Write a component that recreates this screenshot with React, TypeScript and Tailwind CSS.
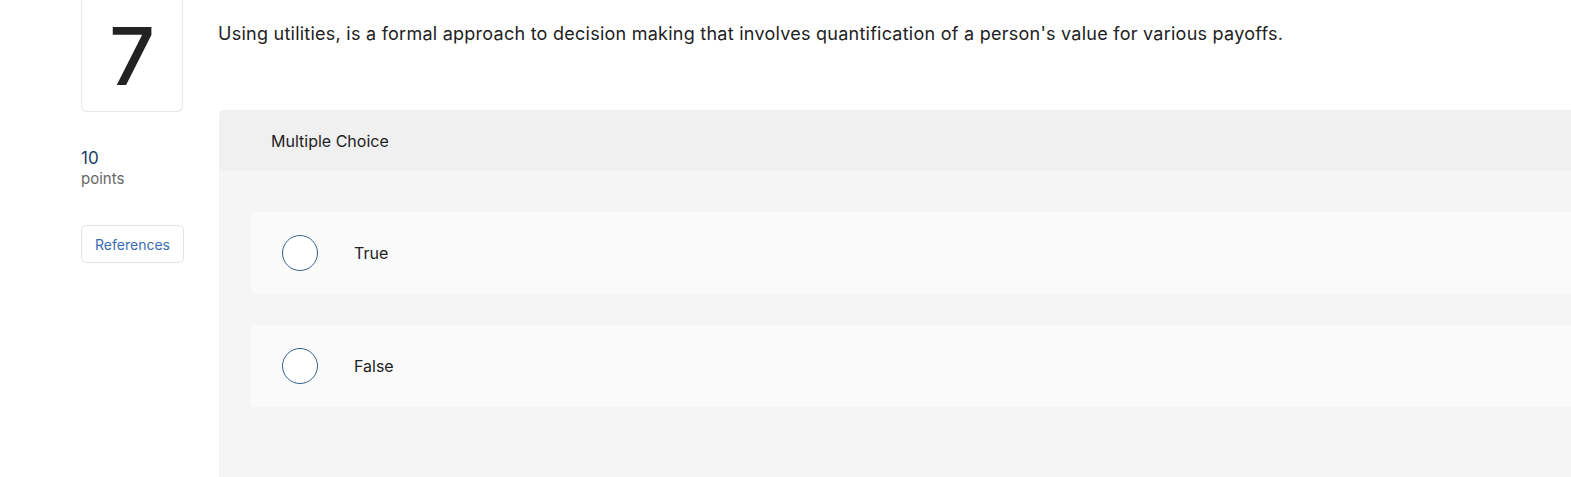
import React from 'react'

const font = { fontFamily: 'Inter, "Open Sans", sans-serif' }

function Option({ label }: { label: string }) {
  return (
    <div className="flex h-[82px] items-center rounded-[4px] bg-[#fafafa] pl-[31px]">
      <span className="h-[36px] w-[36px] shrink-0 rounded-full border-[1.5px] border-[#36618c] bg-white" />
      <span className="ml-[36px] text-[16px] text-[#222]">{label}</span>
    </div>
  )
}

export default function App() {
  return (
    <div className="h-[477px] w-[1571px] overflow-hidden bg-white" style={font}>
      <div className="flex">
        <div className="ml-[81px] flex w-[102px] shrink-0 flex-col">
          <div className="flex h-[112px] items-center justify-center rounded-b-[6px] border border-t-0 border-[#e6e6e6] text-[80px] font-medium leading-none text-[#222]">
            7
          </div>
          <div className="mt-[36px] text-[17px] leading-[20px] text-[#1c3f63]">10</div>
          <div className="mt-[2px] text-[15px] leading-[18px] text-[#666]">points</div>
          <button className="mt-[37px] h-[38px] w-[103px] rounded-[5px] border border-[#e3e3e3] bg-white text-[14px] text-[#3a6cb4]">
            References
          </button>
        </div>

        <div className="ml-[36px] flex min-w-[1400px] flex-col">
          <p className="-ml-px mt-[22px] h-[88px] text-[18px] leading-[24px] tracking-[0.25px] text-[#222]">
            Using utilities, is a formal approach to decision making that involves quantification of a person's value for various payoffs.
          </p>
          <div className="overflow-hidden rounded-tl-[5px]">
            <div className="flex h-[61px] items-center bg-[#f0f0f0] pl-[52px] text-[16px] text-[#222]">
              Multiple Choice
            </div>
            <div className="flex h-[320px] flex-col gap-[31px] bg-[#f5f5f5] pl-[32px] pt-[41px]">
              <Option label="True" />
              <Option label="False" />
            </div>
          </div>
        </div>
      </div>
    </div>
  )
}
